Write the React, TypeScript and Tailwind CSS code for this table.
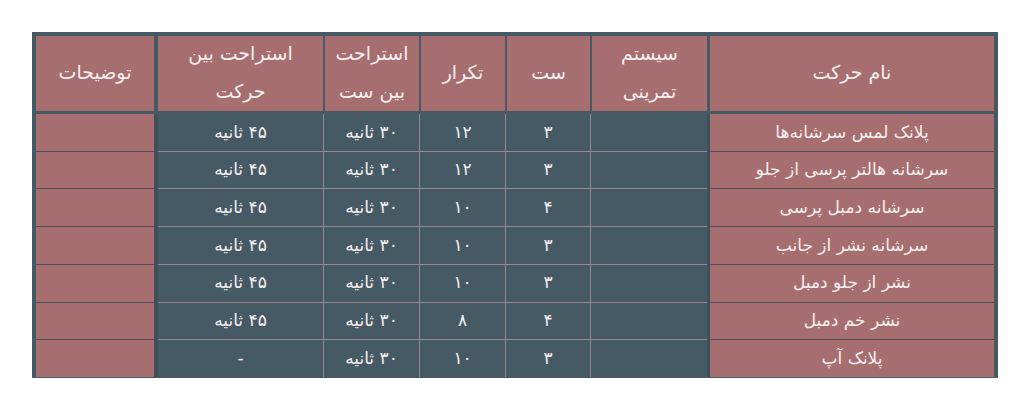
import React from "react";

const rows = [
  { name: "پلانک لمس سرشانه‌ها", system: "", sets: "۳", reps: "۱۲", setRest: "۳۰ ثانیه", moveRest: "۴۵ ثانیه" },
  { name: "سرشانه هالتر پرسی از جلو", system: "", sets: "۳", reps: "۱۲", setRest: "۳۰ ثانیه", moveRest: "۴۵ ثانیه" },
  { name: "سرشانه دمبل پرسی", system: "", sets: "۴", reps: "۱۰", setRest: "۳۰ ثانیه", moveRest: "۴۵ ثانیه" },
  { name: "سرشانه نشر از جانب", system: "", sets: "۳", reps: "۱۰", setRest: "۳۰ ثانیه", moveRest: "۴۵ ثانیه" },
  { name: "نشر از جلو دمبل", system: "", sets: "۳", reps: "۱۰", setRest: "۳۰ ثانیه", moveRest: "۴۵ ثانیه" },
  { name: "نشر خم دمبل", system: "", sets: "۴", reps: "۸", setRest: "۳۰ ثانیه", moveRest: "۴۵ ثانیه" },
  { name: "پلانک آپ", system: "", sets: "۳", reps: "۱۰", setRest: "۳۰ ثانیه", moveRest: "-" },
];

const font = { fontFamily: '"DejaVu Sans", sans-serif' };

function HeadCell({ w, children }: { w: string; children?: React.ReactNode }) {
  return (
    <div className={`${w} flex items-center justify-center bg-[#a76e6f] pb-[3px] text-center text-[19px] leading-[38px] text-[#f6efef]`}>
      <div>{children}</div>
    </div>
  );
}

export default function App() {
  return (
    <div className="w-[1024px] h-[419px] bg-white pt-[32px] pl-[32px]" style={font}>
      <div dir="rtl" className="w-[966px] bg-[#465a66] px-[4px] pt-[4px] pb-[1px]">
        {/* header */}
        <div className="flex h-[75px]">
          <HeadCell w="w-[284px]">نام حرکت</HeadCell>
          <div className="w-[3px]" />
          <div className="flex gap-[2px]">
            <HeadCell w="w-[115px]">سیستم<br />تمرینی</HeadCell>
            <HeadCell w="w-[83px]">ست</HeadCell>
            <HeadCell w="w-[84px]">تکرار</HeadCell>
            <HeadCell w="w-[94px]">استراحت<br />بین ست</HeadCell>
            <HeadCell w="w-[165px]">استراحت بین<br />حرکت</HeadCell>
          </div>
          <div className="w-[4px]" />
          <HeadCell w="w-[118px]">توضیحات</HeadCell>
        </div>

        {/* body */}
        <div className="mt-[3px] flex h-[263px] text-[17px] text-[#f6efef]">
          <div className="w-[284px] grid grid-rows-7 gap-[1px] bg-[#4a4f5a]">
            {rows.map((r) => (
              <div key={r.name} className="flex items-center justify-center bg-[#a76e6f]">{r.name}</div>
            ))}
          </div>
          <div className="w-[3px] bg-[#3f505b]" />
          <div className="w-[549px] grid grid-cols-[116px_84px_85px_95px_165px] grid-rows-7 gap-[1px] bg-[#9a8690]">
            {rows.map((r) => (
              <React.Fragment key={r.name}>
                <div className="flex items-center justify-center bg-[#465a66]">{r.system}</div>
                <div className="flex items-center justify-center bg-[#465a66]">{r.sets}</div>
                <div className="flex items-center justify-center bg-[#465a66]">{r.reps}</div>
                <div className="flex items-center justify-center bg-[#465a66]">{r.setRest}</div>
                <div className="flex items-center justify-center bg-[#465a66]">{r.moveRest}</div>
              </React.Fragment>
            ))}
          </div>
          <div className="w-[4px] bg-[#3f505b]" />
          <div className="w-[118px] grid grid-rows-7 gap-[1px] bg-[#4a4f5a]">
            {rows.map((r) => (
              <div key={r.name} className="bg-[#a76e6f]" />
            ))}
          </div>
        </div>
      </div>
    </div>
  );
}
